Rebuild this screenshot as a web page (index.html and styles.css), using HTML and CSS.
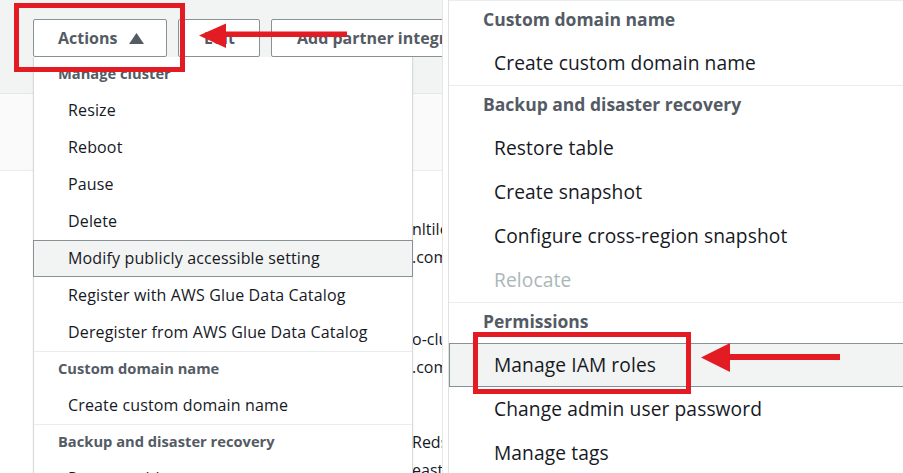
FILE: index.html
```html
<!DOCTYPE html>
<html lang="en">
<head>
<meta charset="utf-8">
<title>Redshift cluster actions</title>
<link rel="stylesheet" href="styles.css">
</head>
<body>
<div class="shot">
  <section class="left">
    <div class="toolbar">
      <button class="btn btn-actions">Actions <svg class="caret" viewBox="0 0 15 11"><polygon points="7.5,0 15,11 0,11"/></svg></button>
      <button class="btn btn-edit">Edit</button>
      <button class="btn btn-partner">Add partner integration</button>
    </div>
    <div class="band"></div>
    <div class="content">
      <div class="frag-group g1"><div>nltile</div><div>.com</div></div>
      <div class="frag-group g2"><div>o-clu</div><div>.com</div></div>
      <div class="frag-group g3"><div>Reds</div><div>east</div></div>
    </div>
    <div class="menu menu-left">
      <div class="group">
        <div class="heading">Manage cluster</div>
        <div class="item">Resize</div>
        <div class="item">Reboot</div>
        <div class="item">Pause</div>
        <div class="item">Delete</div>
        <div class="item is-hover">Modify publicly accessible setting</div>
        <div class="item">Register with AWS Glue Data Catalog</div>
        <div class="item">Deregister from AWS Glue Data Catalog</div>
      </div>
      <div class="group">
        <div class="heading">Custom domain name</div>
        <div class="item">Create custom domain name</div>
      </div>
      <div class="group">
        <div class="heading">Backup and disaster recovery</div>
        <div class="item">Restore table</div>
      </div>
    </div>
  </section>
  <section class="right">
    <div class="menu menu-right">
      <div class="group">
        <div class="heading">Custom domain name</div>
        <div class="item">Create custom domain name</div>
      </div>
      <div class="group">
        <div class="heading">Backup and disaster recovery</div>
        <div class="item">Restore table</div>
        <div class="item">Create snapshot</div>
        <div class="item">Configure cross-region snapshot</div>
        <div class="item is-disabled">Relocate</div>
      </div>
      <div class="group">
        <div class="heading">Permissions</div>
        <div class="item is-hover">Manage IAM roles</div>
        <div class="item">Change admin user password</div>
        <div class="item">Manage tags</div>
      </div>
    </div>
  </section>
  <div class="callout callout-actions"></div>
  <div class="callout callout-iam"></div>
  <svg class="arrows" viewBox="0 0 903 473" width="903" height="473">
    <rect x="224" y="31.5" width="123" height="5.5" fill="#e31b23"/>
    <polygon points="199,35.5 226,23.5 226,48" fill="#e31b23"/>
    <rect x="728" y="354" width="112" height="6" fill="#e31b23"/>
    <polygon points="701,357.5 730,343 730,372" fill="#e31b23"/>
  </svg>
</div>
</body>
</html>
```
FILE: styles.css
```css
* { box-sizing: border-box; }
html, body { margin: 0; padding: 0; background: #fff; }
body { font-family: "Open Sans", "Noto Sans", sans-serif; color: #16191f; }

.shot {
  position: relative;
  width: 903px;
  height: 473px;
  overflow: hidden;
  display: flex;
}

/* ---------- left crop ---------- */
.left {
  position: relative;
  width: 443px;
  height: 473px;
  flex: none;
  overflow: hidden;
  border-right: 1px solid #e6e8e9;
}
.toolbar {
  height: 94px;
  background: #f2f3f3;
  border-bottom: 1px solid #e4e6e7;
  display: flex;
  gap: 11px;
  padding: 19px 0 0 33px;
  white-space: nowrap;
}
.btn {
  height: 38px;
  flex: none;
  display: flex;
  align-items: center;
  border: 1px solid #879196;
  border-radius: 2px;
  background: #fff;
  font: 700 16px "Open Sans", "Noto Sans", sans-serif;
  color: #545b64;
  padding: 0 0 0 24px;
}
.btn-actions { width: 134px; }
.caret { width: 15px; height: 11px; margin-left: 12px; fill: #545b64; }
.btn-edit { width: 82px; padding-left: 25px; }
.btn-partner { width: 240px; padding-left: 25px; }
.band {
  height: 77px;
  background: #fafafa;
  border-bottom: 1px solid #eaeded;
}
.content {
  padding-left: 412px;
  font-size: 16px;
  line-height: 28px;
  white-space: nowrap;
}
.frag-group { overflow: hidden; }
.g1 { margin-top: 44px; }
.g2 { margin-top: 54px; }
.g3 { margin-top: 47px; }

.menu { background: #fff; }
.menu .group + .group { border-top: 1px solid #eaeded; }
.menu .heading { font-weight: 700; color: #545b64; white-space: nowrap; }
.menu .item { white-space: nowrap; color: #16191f; }
.menu .item.is-disabled { color: #aab7b8; }
.menu .item.is-hover {
  background: #f2f3f3;
  border: 1px solid #879196;
}

.menu-left {
  position: absolute;
  left: 33px;
  top: 57px;
  width: 380px;
  height: 430px;
  border-left: 1px solid #d5dbdb;
  border-right: 1px solid #d5dbdb;
  box-shadow: 0 1px 2px rgba(0,0,0,0.08);
  z-index: 2;
}
.menu-left .heading {
  height: 35px;
  padding: 7px 0 0 24px;
  font-size: 14.7px;
  line-height: 19px;
}
.menu-left .item {
  height: 37px;
  padding-left: 34px;
  font-size: 16px;
  letter-spacing: 0.15px;
  line-height: 37px;
}
.menu-left .item.is-hover {
  margin: 0 -1px;
  padding-left: 34px;
  line-height: 35px;
}

/* ---------- right crop ---------- */
.right {
  position: relative;
  flex: 1;
  margin-left: 5px;
  border-left: 1px solid #dfe2e3;
  height: 473px;
  overflow: hidden;
}
.menu-right .group:first-child { border-top: 1px solid #eaeded; }
.menu-right .heading {
  height: 40px;
  padding: 7px 0 0 34px;
  font-size: 17.5px;
  line-height: 22px;
}
.menu-right .item {
  height: 44px;
  padding-left: 45px;
  font-size: 19.2px;
  letter-spacing: 0.1px;
  line-height: 44px;
}
.menu-right .item.is-hover {
  margin-right: -2px;
  line-height: 42px;
  padding-left: 44px;
}

/* ---------- annotations ---------- */
.callout {
  position: absolute;
  border: 5px solid #e31b23;
  z-index: 5;
}
.callout-actions { left: 14px; top: 3px; width: 171px; height: 69px; }
.callout-iam { left: 473px; top: 332px; width: 218px; height: 62px; }
.arrows {
  position: absolute;
  left: 0;
  top: 0;
  z-index: 6;
  pointer-events: none;
}
```
